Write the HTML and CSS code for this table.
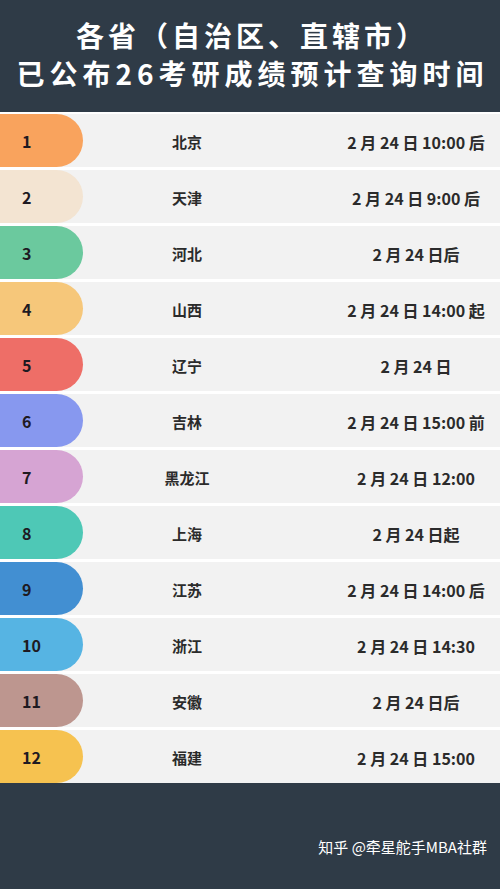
FILE: index.html
```html
<!DOCTYPE html>
<html lang="zh-CN">
<head>
    <meta charset="UTF-8">
    <meta name="viewport" content="width=device-width, initial-scale=1.0">
    <title>26考研成绩查询时间</title>
    <link rel="stylesheet" href="styles.css">
</head>
<body>
    <header class="header">
        <h1 class="title">各省（自治区、直辖市）</h1>
        <h1 class="title wide">已公布26考研成绩预计查询时间</h1>
    </header>
    <div class="list">
        <div class="row"><div class="num c1">1</div><div class="prov">北京</div><div class="date">2 月 24 日 10:00 后</div></div>
        <div class="row"><div class="num c2">2</div><div class="prov">天津</div><div class="date">2 月 24 日 9:00 后</div></div>
        <div class="row"><div class="num c3">3</div><div class="prov">河北</div><div class="date">2 月 24 日后</div></div>
        <div class="row"><div class="num c4">4</div><div class="prov">山西</div><div class="date">2 月 24 日 14:00 起</div></div>
        <div class="row"><div class="num c5">5</div><div class="prov">辽宁</div><div class="date">2 月 24 日</div></div>
        <div class="row"><div class="num c6">6</div><div class="prov">吉林</div><div class="date">2 月 24 日 15:00 前</div></div>
        <div class="row"><div class="num c7">7</div><div class="prov">黑龙江</div><div class="date">2 月 24 日 12:00</div></div>
        <div class="row"><div class="num c8">8</div><div class="prov">上海</div><div class="date">2 月 24 日起</div></div>
        <div class="row"><div class="num c9">9</div><div class="prov">江苏</div><div class="date">2 月 24 日 14:00 后</div></div>
        <div class="row"><div class="num c10">10</div><div class="prov">浙江</div><div class="date">2 月 24 日 14:30</div></div>
        <div class="row"><div class="num c11">11</div><div class="prov">安徽</div><div class="date">2 月 24 日后</div></div>
        <div class="row"><div class="num c12">12</div><div class="prov">福建</div><div class="date">2 月 24 日 15:00</div></div>
    </div>
    <footer class="footer">
        <span class="credit">知乎 @牵星舵手MBA社群</span>
    </footer>
</body>
</html>
```

FILE: styles.css
```css
body {
    margin: 0;
    background: #ffffff;
    font-family: "Noto Sans CJK SC", "Noto Sans", sans-serif;
    width: 500px;
    height: 889px;
    display: flex;
    flex-direction: column;
}
.header {
    background: #2f3b47;
    height: 112px;
    padding-top: 16px;
    box-sizing: border-box;
    text-align: center;
}
.title {
    margin: 0;
    color: #ffffff;
    font-size: 28px;
    font-weight: 700;
    line-height: 38px;
    letter-spacing: 4px;
    padding-left: 4px;
}
.title.wide {
    letter-spacing: 5px;
    padding-left: 5px;
}
.list {
    margin-top: 2px;
    display: flex;
    flex-direction: column;
    gap: 3px;
}
.row {
    display: grid;
    grid-template-columns: 83px 208px 1fr;
    align-items: center;
    height: 53px;
    background: #f2f2f2;
    color: #2b2b2b;
    font-weight: 700;
    font-size: 15px;
}
.num {
    height: 53px;
    line-height: 55px;
    padding-left: 22px;
    border-radius: 0 27px 27px 0;
    font-size: 16px;
    color: #1e1a22;
}
.prov {
    text-align: center;
    padding-top: 2px;
}
.date {
    text-align: center;
    padding-left: 41px;
    padding-top: 2px;
    font-size: 16px;
    white-space: nowrap;
}
.c1 { background: #f9a35d; }
.c2 { background: #f3e4d2; }
.c3 { background: #6bc99e; }
.c4 { background: #f6c77a; }
.c5 { background: #ee6e67; }
.c6 { background: #8798ef; }
.c7 { background: #d6a4d3; }
.c8 { background: #4ec8b6; }
.c9 { background: #428fd2; }
.c10 { background: #56b4e3; }
.c11 { background: #bd968f; }
.c12 { background: #f6c250; }
.footer {
    flex: 1;
    background: #2f3b47;
    display: flex;
    justify-content: flex-end;
    align-items: flex-end;
    padding: 0 13px 32px 0;
}
.credit {
    color: #ffffff;
    font-size: 15px;
}
```
